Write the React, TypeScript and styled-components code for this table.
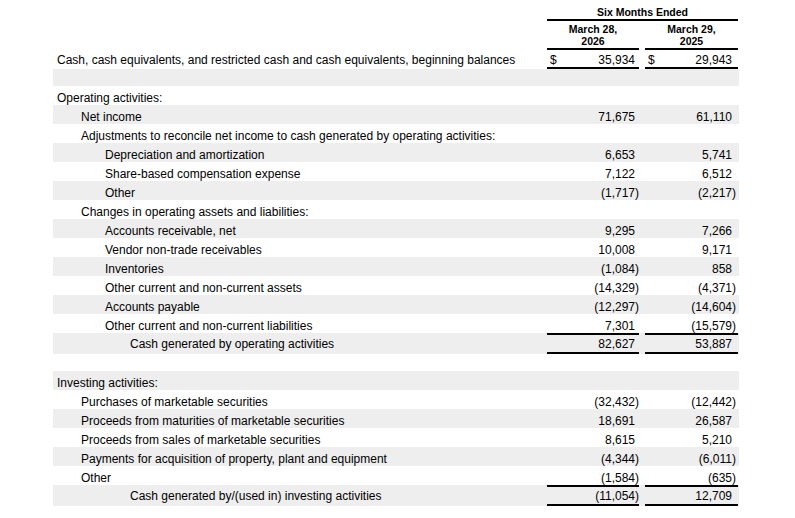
import React from 'react';
import styled, { createGlobalStyle } from 'styled-components';

const GlobalStyle = createGlobalStyle`
    body {
        margin: 0;
        background: #fff;
        font-family: "Liberation Sans", Arial, sans-serif;
        color: #000;
    }
`

const Page = styled.div`
    padding-left: 53px;
`

const Statement = styled.div`
    width: 686px;
    font-size: 12px;
`

const Grid = styled.div<{ $h: number; $stripe?: boolean; $pt?: number }>`
    box-sizing: border-box;
    display: grid;
    grid-template-columns: 488px 92px 93px;
    column-gap: 6px;
    padding-right: 1px;
    padding-top: ${p => p.$pt ?? 0}px;
    height: ${p => p.$h}px;
    background: ${p => (p.$stripe ? '#eeeeee' : '#ffffff')};
`

const Period = styled.div`
    grid-column: 2 / 4;
    box-sizing: border-box;
    padding-top: 5px;
    border-bottom: 2px solid #000;
    text-align: center;
    font-size: 10.5px;
    font-weight: bold;
    line-height: 14px;
`

const ColHead = styled.div`
    box-sizing: border-box;
    display: flex;
    align-items: center;
    justify-content: center;
    border-bottom: 2px solid #000;
    text-align: center;
    font-size: 10.5px;
    font-weight: bold;
    line-height: 12px;
`

const Label = styled.div<{ $level: number; $lines?: string }>`
    box-sizing: border-box;
    display: flex;
    align-items: center;
    padding-left: ${p => 4 + p.$level * 24 + (p.$level > 2 ? 1 : 0)}px;
    border-top: ${p => (p.$lines === 'both' ? '2px solid transparent' : '0')};
    border-bottom: ${p => (p.$lines ? '2px solid transparent' : '0')};
    white-space: nowrap;
`

const Num = styled.div<{ $right: number; $lines?: string }>`
    box-sizing: border-box;
    display: flex;
    align-items: center;
    padding-left: 3px;
    padding-right: ${p => p.$right}px;
    border-top: ${p => (p.$lines === 'both' ? '2px solid #000' : '0')};
    border-bottom: ${p => (p.$lines ? '2px solid #000' : '0')};
    white-space: nowrap;
`

const Dollar = styled.span`
    width: 8px;
`

const Value = styled.span`
    flex: 1;
    text-align: right;
`

const Paren = styled.span`
    width: 4px;
`

type Line = {
    label?: string;
    level?: number;
    a?: string;
    b?: string;
    dollar?: boolean;
    lines?: 'bottom' | 'both';
    h?: number;
};

const rows: Line[] = [
    { label: 'Cash, cash equivalents, and restricted cash and cash equivalents, beginning balances', level: 0, a: '35,934', b: '29,943', dollar: true, lines: 'bottom' },
    { h: 17 },
    { label: 'Operating activities:', level: 0 },
    { label: 'Net income', level: 1, a: '71,675', b: '61,110' },
    { label: 'Adjustments to reconcile net income to cash generated by operating activities:', level: 1 },
    { label: 'Depreciation and amortization', level: 2, a: '6,653', b: '5,741' },
    { label: 'Share-based compensation expense', level: 2, a: '7,122', b: '6,512' },
    { label: 'Other', level: 2, a: '(1,717)', b: '(2,217)' },
    { label: 'Changes in operating assets and liabilities:', level: 1 },
    { label: 'Accounts receivable, net', level: 2, a: '9,295', b: '7,266' },
    { label: 'Vendor non-trade receivables', level: 2, a: '10,008', b: '9,171' },
    { label: 'Inventories', level: 2, a: '(1,084)', b: '858' },
    { label: 'Other current and non-current assets', level: 2, a: '(14,329)', b: '(4,371)' },
    { label: 'Accounts payable', level: 2, a: '(12,297)', b: '(14,604)' },
    { label: 'Other current and non-current liabilities', level: 2, a: '7,301', b: '(15,579)' },
    { label: 'Cash generated by operating activities', level: 3, a: '82,627', b: '53,887', lines: 'both' },
    { h: 17 },
    { label: 'Investing activities:', level: 0 },
    { label: 'Purchases of marketable securities', level: 1, a: '(32,432)', b: '(12,442)' },
    { label: 'Proceeds from maturities of marketable securities', level: 1, a: '18,691', b: '26,587' },
    { label: 'Proceeds from sales of marketable securities', level: 1, a: '8,615', b: '5,210' },
    { label: 'Payments for acquisition of property, plant and equipment', level: 1, a: '(4,344)', b: '(6,011)' },
    { label: 'Other', level: 1, a: '(1,584)', b: '(635)' },
    { label: 'Cash generated by/(used in) investing activities', level: 3, a: '(11,054)', b: '12,709', lines: 'both' },
];

const Amount = ({ v, dollar, right, lines }: { v?: string; dollar?: boolean; right: number; lines?: string }) => {
    const neg = !!v && v.startsWith('(');
    return (
        <Num $right={right} $lines={lines}>
            {dollar ? <Dollar>$</Dollar> : null}
            <Value>{neg ? v!.slice(0, -1) : v}</Value>
            <Paren>{neg ? ')' : ''}</Paren>
        </Num>
    );
};

const App = () => {
    return (
        <Page>
            <GlobalStyle />
            <Statement>
                <Grid $h={21}>
                    <div />
                    <Period>Six Months Ended</Period>
                </Grid>
                <Grid $h={29}>
                    <div />
                    <ColHead>March 28,<br />2026</ColHead>
                    <ColHead>March 29,<br />2025</ColHead>
                </Grid>
                {rows.map((r, i) => {
                    const h = r.h ?? (r.lines === 'both' ? 21 : 19);
                    // text sits a little low in the plain rows
                    const pt = r.lines === 'both' ? 0 : r.lines ? 2 : 4;
                    if (!r.label) {
                        return <Grid key={i} $h={h} $stripe={i % 2 === 1} />;
                    }
                    return (
                        <Grid key={i} $h={h} $stripe={i % 2 === 1} $pt={pt}>
                            <Label $level={r.level ?? 0} $lines={r.lines}>{r.label}</Label>
                            {r.a || r.b ? (
                                <>
                                    <Amount v={r.a} dollar={r.dollar} right={0} lines={r.lines} />
                                    <Amount v={r.b} dollar={r.dollar} right={2} lines={r.lines} />
                                </>
                            ) : null}
                        </Grid>
                    );
                })}
            </Statement>
        </Page>
    );
};

export default App;
